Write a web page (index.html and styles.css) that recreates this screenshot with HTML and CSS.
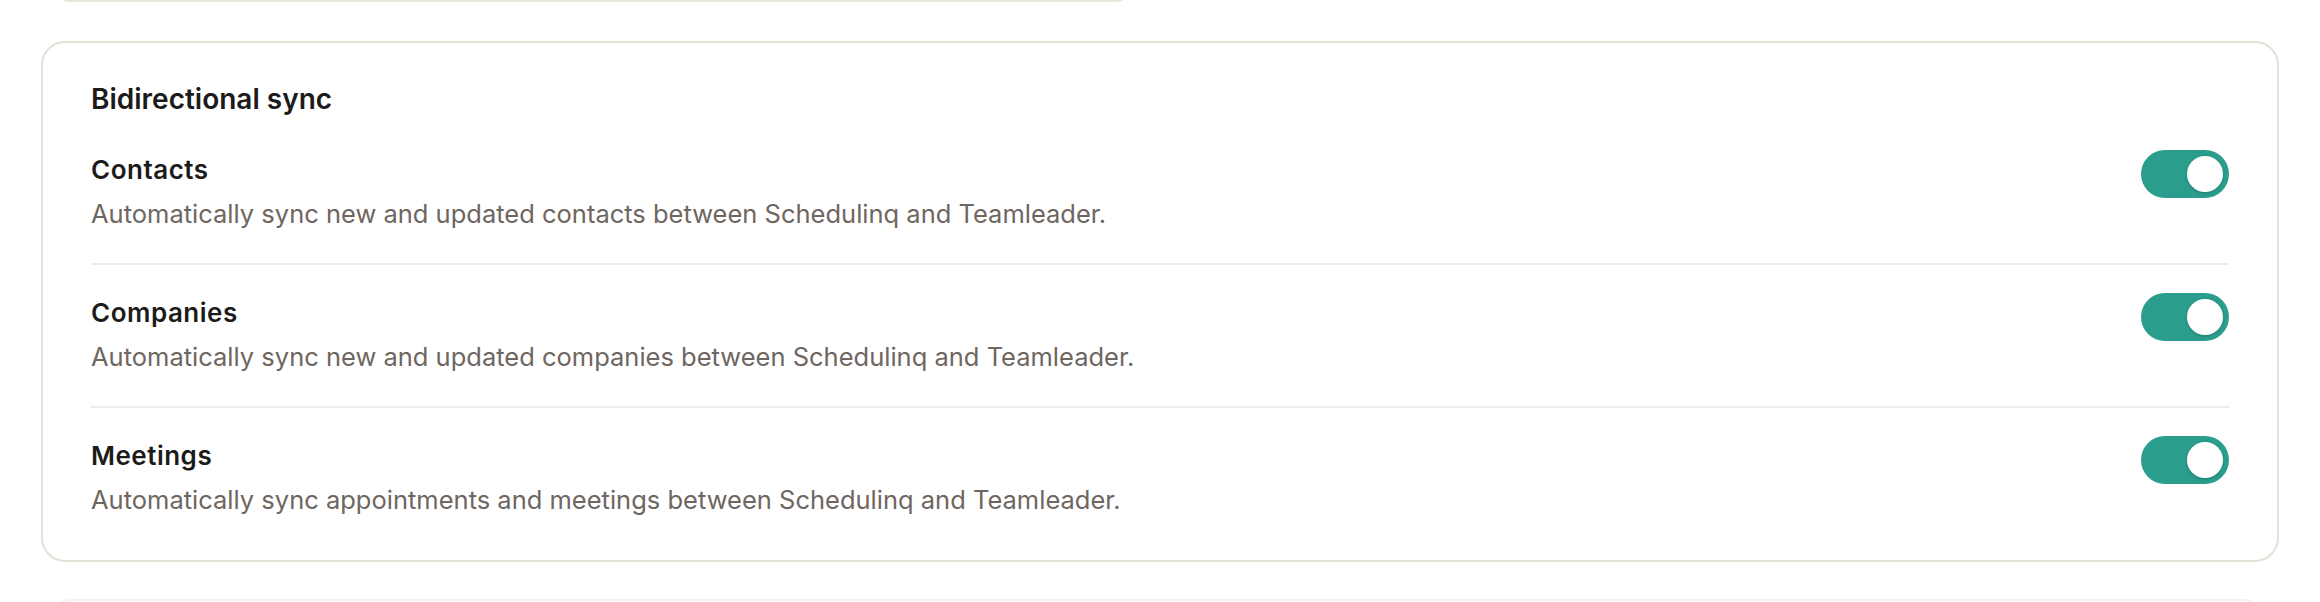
FILE: index.html
```html
<!DOCTYPE html>
<html lang="en">
<head>
    <meta charset="UTF-8">
    <meta name="viewport" content="width=device-width, initial-scale=1.0">
    <title>Teamleader - Bidirectional sync</title>
    <link rel="stylesheet" href="styles.css">
</head>
<body>
    <div class="page">
        <div class="prev-card"></div>

        <section class="sync-card">
            <h2 class="sync-title">Bidirectional sync</h2>

            <div class="sync-row">
                <div class="sync-text">
                    <div class="sync-label">Contacts</div>
                    <div class="sync-desc">Automatically sync new and updated contacts between Schedulinq and Teamleader.</div>
                </div>
                <button class="toggle on" type="button" aria-pressed="true"><span class="knob"></span></button>
            </div>

            <div class="sync-row">
                <div class="sync-text">
                    <div class="sync-label">Companies</div>
                    <div class="sync-desc">Automatically sync new and updated companies between Schedulinq and Teamleader.</div>
                </div>
                <button class="toggle on" type="button" aria-pressed="true"><span class="knob"></span></button>
            </div>

            <div class="sync-row">
                <div class="sync-text">
                    <div class="sync-label">Meetings</div>
                    <div class="sync-desc">Automatically sync appointments and meetings between Schedulinq and Teamleader.</div>
                </div>
                <button class="toggle on" type="button" aria-pressed="true"><span class="knob"></span></button>
            </div>
        </section>

        <div class="next-card"></div>
    </div>
</body>
</html>
```

FILE: styles.css
```css
body {
    margin: 0;
    background: #ffffff;
    font-family: 'Inter', 'Liberation Sans', sans-serif;
    color: #1c1b1a;
}
.page {
    padding: 0 41px;
}
.prev-card {
    height: 40px;
    margin: -38px 0 0 13px;
    width: 1078px;
    border: 2px solid #ebe6dd;
    border-radius: 0 0 16px 16px;
    box-sizing: border-box;
}
.sync-card {
    margin-top: 39px;
    background: #fff;
    border: 2px solid #e6e1d7;
    border-radius: 24px;
    padding: 38px 48px 40px;
}
.sync-title {
    margin: 0 0 5px;
    font-size: 28px;
    line-height: 36px;
    font-weight: 600;
}
.sync-row {
    display: flex;
    justify-content: space-between;
    align-items: flex-start;
    padding: 28px 0 29px;
    border-bottom: 2px solid #efebe6;
}
.sync-row:last-child {
    border-bottom: none;
    padding-bottom: 0;
}
.sync-label {
    font-size: 26px;
    line-height: 40px;
    font-weight: 600;
    letter-spacing: 0.5px;
}
.sync-desc {
    margin-top: 4px;
    font-size: 25.5px;
    line-height: 40px;
    color: #6e6660;
}
.toggle {
    flex: none;
    display: flex;
    justify-content: flex-end;
    align-items: center;
    width: 88px;
    height: 48px;
    padding: 0 6px;
    border: none;
    border-radius: 24px;
    background: #2a9d8c;
    cursor: pointer;
}
.knob {
    width: 36px;
    height: 36px;
    border-radius: 50%;
    background: #fff;
    box-shadow: 0 1px 3px rgba(0, 0, 0, 0.2);
}
.next-card {
    margin: 37px 19px 0 13px;
    height: 40px;
    border: 2px solid #fbeeee;
    border-radius: 16px 16px 0 0;
}
```
